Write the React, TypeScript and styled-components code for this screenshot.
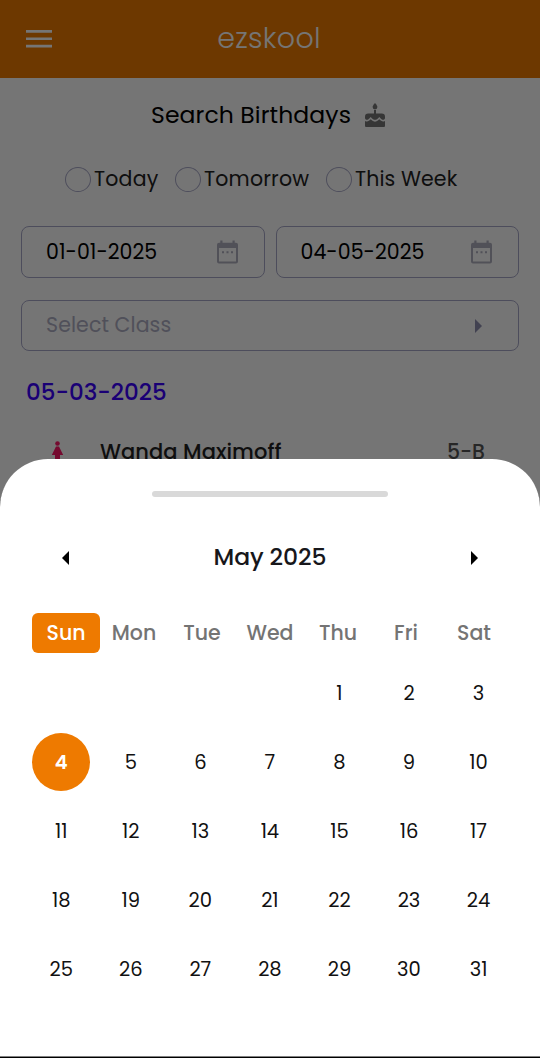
import React from 'react';
import styled, { createGlobalStyle, css } from 'styled-components';

const GlobalStyle = createGlobalStyle`
  * { box-sizing: border-box; }
  html, body { margin: 0; padding: 0; background: #fff; }
  body {
    font-family: Poppins, Inter, "Open Sans", sans-serif;
    overflow: hidden;
  }
`;

const Screen = styled.div`
  position: relative;
  width: 540px;
  height: 1058px;
  overflow: hidden;
  background: #fff;
`;

const Header = styled.header`
  display: grid;
  grid-template-columns: 78px 1fr 78px;
  align-items: center;
  height: 78px;
  background: #ee7a00;
  color: #fff;
`;

const MenuButton = styled.button`
  display: flex;
  justify-content: center;
  padding: 0;
  border: 0;
  background: none;
  color: inherit;
`;

const Brand = styled.h1`
  margin: 0;
  padding: 0 2px 2px 0;
  text-align: center;
  font-size: 28.5px;
  line-height: 40px;
  font-weight: 300;
  letter-spacing: 0.3px;
`;

const Heading = styled.div`
  display: flex;
  justify-content: center;
  align-items: center;
  gap: 12px;
  height: 74px;
  padding-right: 2px;
  color: #000;
`;

const HeadingText = styled.h2`
  margin: 0;
  padding-bottom: 1px;
  font-size: 23.5px;
  font-weight: 400;
  letter-spacing: 0.1px;
`;

const RadioGroup = styled.div`
  display: flex;
  align-items: center;
  height: 54px;
  padding-left: 65px;
`;

const RadioOption = styled.label<{ $width: number; $spacing: number }>`
  display: flex;
  align-items: center;
  gap: 3px;
  width: ${(p) => p.$width}px;
  font-size: 20.5px;
  letter-spacing: ${(p) => p.$spacing}px;
  line-height: 28px;
  white-space: nowrap;
  color: #222;
`;

const RadioLabel = styled.span`
  padding-bottom: 1px;
`;

const RadioCircle = styled.span`
  flex: none;
  width: 26px;
  height: 25px;
  border: 1.5px solid #a9a9c8;
  border-radius: 50%;
`;

const Fields = styled.div`
  display: grid;
  grid-template-columns: 1fr 1fr;
  gap: 22px 11px;
  padding: 20px 21px 0;
`;

const Field = styled.div<{ $wide?: boolean }>`
  display: flex;
  justify-content: space-between;
  align-items: center;
  height: 52px;
  padding: 0 26px 0 24px;
  border: 1.5px solid #a9a9c8;
  border-radius: 8px;
  font-size: 20.5px;
  color: #000;
  ${(p) =>
    p.$wide &&
    css`
      grid-column: 1 / -1;
      height: 51px;
      padding-right: 36px;
      color: #aeaec4;
    `}
`;

const FieldText = styled.span<{ $spacing: number }>`
  padding-bottom: 2px;
  letter-spacing: ${(p) => p.$spacing}px;
`;

const DateHeading = styled.h3`
  margin: 21px 0 0 26px;
  font-size: 23px;
  line-height: 40px;
  font-weight: 500;
  letter-spacing: 0;
  color: #3a00ff;
`;

const PersonRow = styled.div`
  display: grid;
  grid-template-columns: 14px 1fr auto;
  align-items: center;
  height: 44px;
  margin-top: 18px;
  padding: 0 55px 0 50px;
`;

const PersonName = styled.span`
  padding-left: 36px;
  padding-bottom: 1px;
  font-size: 21px;
  font-weight: 500;
  letter-spacing: 0.05px;
  color: #222;
`;

const ClassName = styled.span`
  padding-bottom: 1px;
  font-size: 20.5px;
  font-weight: 500;
  color: #555;
`;

const Overlay = styled.div`
  position: absolute;
  inset: 0;
  display: flex;
  flex-direction: column;
  justify-content: flex-end;
  background: rgba(0, 0, 0, 0.54);
`;

const Sheet = styled.section`
  display: flex;
  flex-direction: column;
  height: 598px;
  margin-bottom: 1px;
  padding: 32px 32px 0;
  border-bottom: 1px solid #808080;
  border-radius: 48px 48px 0 0;
  background: #fff;
  box-shadow: 0 1px 0 #000;
`;

const Handle = styled.div`
  align-self: center;
  width: 236px;
  height: 6px;
  border-radius: 3px;
  background: #d9d9d9;
`;

const MonthBar = styled.div`
  display: flex;
  justify-content: space-between;
  align-items: center;
  height: 40px;
  margin-top: 41px;
  padding: 0 30px;
`;

const MonthTitle = styled.h2`
  margin: 0;
  padding-bottom: 3px;
  font-size: 23.5px;
  font-weight: 500;
  letter-spacing: -0.1px;
  color: #17171b;
`;

const ArrowButton = styled.button`
  display: flex;
  padding: 0;
  border: 0;
  background: none;
  color: #000;
`;

const Weekdays = styled.div`
  display: grid;
  grid-template-columns: repeat(7, 68px);
  margin-top: 35px;
`;

const Weekday = styled.div<{ $active: boolean }>`
  height: 40px;
  border-radius: 6px;
  text-align: center;
  font-size: 20.5px;
  line-height: 39px;
  font-weight: 500;
  background: ${(p) => (p.$active ? '#ee7a00' : 'transparent')};
  color: ${(p) => (p.$active ? '#fff' : '#747474')};
`;

const Days = styled.div`
  display: grid;
  grid-template-columns: repeat(7, 58px);
  grid-auto-rows: 58px;
  column-gap: 11.55px;
  row-gap: 11px;
  margin-top: 11px;
`;

const Day = styled.button<{ $active: boolean; $start?: number }>`
  display: flex;
  justify-content: center;
  align-items: center;
  padding: 0 0 0 0.5px;
  border: 0;
  border-radius: 50%;
  grid-column-start: ${(p) => p.$start ?? 'auto'};
  background: ${(p) => (p.$active ? '#ee7a00' : 'transparent')};
  color: ${(p) => (p.$active ? '#fff' : '#111')};
  font-family: inherit;
  font-size: 19.5px;
  font-weight: ${(p) => (p.$active ? 600 : 400)};
`;

const MenuIcon = () => (
  <svg width="26" height="18" viewBox="0 0 26 18" fill="currentColor">
    <path d="M0 0h26v2.700H0zM0 7.400h26v2.700H0zM0 14.700h26v2.700H0z" />
  </svg>
);

const CakeIcon = () => (
  <svg width="24" height="25" viewBox="0 0 24 25" fill="#777">
    <path d="M12 0c1.700 2 2.400 3 2.400 4.100a2.400 2.400 0 0 1-4.800 0C9.600 3 10.300 2 12 0z" />
    <path d="M11 7h2v3.500h5.800A3.200 3.200 0 0 1 22 13.700v1.300c0 1-.8 1.800-1.900 1.800-1 0-1.500-.5-2.400-1.400l-1.400-1.400-1.400 1.400c-.9.900-1.700 1.400-2.900 1.400s-2-.5-2.900-1.400L7.700 14l-1.400 1.400c-.9.900-1.400 1.400-2.400 1.400-1.100 0-1.900-.8-1.900-1.800v-1.300a3.200 3.200 0 0 1 3.200-3.200H11z" />
    <path d="M2 17.900c1.900 1 3.400.5 4.300-.3l1.400-1.300 1.400 1.300c1.600 1.500 4.200 1.500 5.800 0l1.400-1.300 1.400 1.300c.9.800 2.400 1.300 4.300.3v5a1 1 0 0 1-1 1H3a1 1 0 0 1-1-1z" />
  </svg>
);

const CalendarIcon = () => (
  <svg width="21" height="24" viewBox="0 0 21 24" fill="#b0b0c0">
    <path
      fillRule="evenodd"
      d="M3.300 0.500h2.200v2.300h10V0.500h2.200v2.300H19a2 2 0 0 1 2 2V21.500a2 2 0 0 1-2 2H2a2 2 0 0 1-2-2V4.800a2 2 0 0 1 2-2h1.300zM2 8v13.500h17V8z"
    />
    <path d="M5 11.200h2v2H5zM9.500 11.200h2v2h-2zM14 11.200h2v2h-2z" />
  </svg>
);

const PersonIcon = () => (
  <svg width="14" height="31" viewBox="0 0 14 31" fill="#ff1a6a">
    <circle cx="7.500" cy="6.500" r="2.300" />
    <path d="M6 9.600h3l4.200 8.400H10V31H5V18H1.800z" />
  </svg>
);

const Triangle = ({ left = false, color = 'currentColor' }: { left?: boolean; color?: string }) => (
  <svg width="8" height="14" viewBox="0 0 8 14" fill={color}>
    <path d={left ? 'M7 0v14L0 7z' : 'M1 0v14l7-7z'} />
  </svg>
);

const weekdays = ['Sun', 'Mon', 'Tue', 'Wed', 'Thu', 'Fri', 'Sat'];
const days = Array.from({ length: 31 }, (_, i) => i + 1);

export default function App() {
  return (
    <>
      <GlobalStyle />
      <Screen>
        <Header>
          <MenuButton aria-label="Menu">
            <MenuIcon />
          </MenuButton>
          <Brand>ezskool</Brand>
        </Header>
        <Heading>
          <HeadingText>Search Birthdays</HeadingText>
          <CakeIcon />
        </Heading>
        <RadioGroup>
          <RadioOption $width={110} $spacing={0.2}>
            <RadioCircle />
            <RadioLabel>Today</RadioLabel>
          </RadioOption>
          <RadioOption $width={151} $spacing={0.2}>
            <RadioCircle />
            <RadioLabel>Tomorrow</RadioLabel>
          </RadioOption>
          <RadioOption $width={140} $spacing={0.1}>
            <RadioCircle />
            <RadioLabel>This Week</RadioLabel>
          </RadioOption>
        </RadioGroup>
        <Fields>
          <Field>
            <FieldText $spacing={0.05}>01-01-2025</FieldText>
            <CalendarIcon />
          </Field>
          <Field>
            <FieldText $spacing={0.05}>04-05-2025</FieldText>
            <CalendarIcon />
          </Field>
          <Field $wide>
            <FieldText $spacing={0.1}>Select Class</FieldText>
            <Triangle color="#9090b0" />
          </Field>
        </Fields>
        <DateHeading>05-03-2025</DateHeading>
        <PersonRow>
          <PersonIcon />
          <PersonName>Wanda Maximoff</PersonName>
          <ClassName>5-B</ClassName>
        </PersonRow>
        <Overlay>
          <Sheet>
            <Handle />
            <MonthBar>
              <ArrowButton aria-label="Previous month">
                <Triangle left />
              </ArrowButton>
              <MonthTitle>May 2025</MonthTitle>
              <ArrowButton aria-label="Next month">
                <Triangle />
              </ArrowButton>
            </MonthBar>
            <Weekdays>
              {weekdays.map((name, i) => (
                <Weekday key={name} $active={i === 0}>
                  {name}
                </Weekday>
              ))}
            </Weekdays>
            <Days>
              {days.map((day) => (
                <Day key={day} $active={day === 4} $start={day === 1 ? 5 : undefined}>
                  {day}
                </Day>
              ))}
            </Days>
          </Sheet>
        </Overlay>
      </Screen>
    </>
  );
}
